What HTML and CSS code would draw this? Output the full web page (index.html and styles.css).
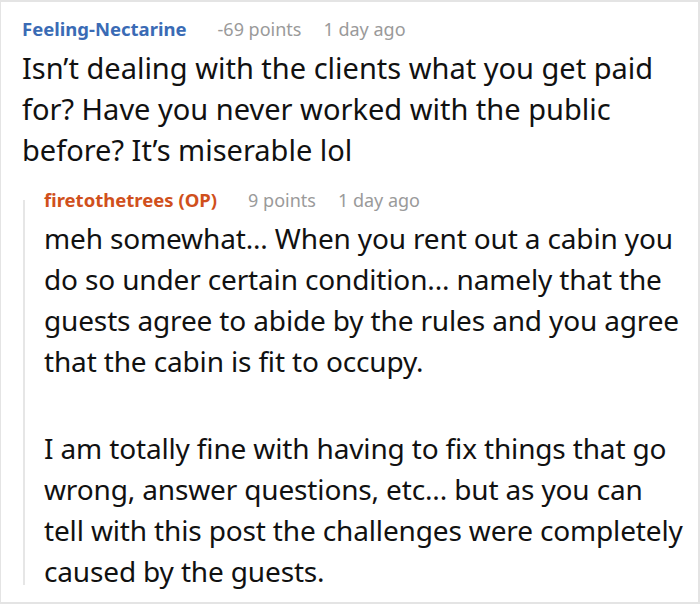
FILE: index.html
```html
<!DOCTYPE html>
<html lang="en">
<head>
<meta charset="utf-8">
<link rel="stylesheet" href="styles.css">
</head>
<body>
<div class="frame">
  <div class="comment">
    <div class="meta">
      <span class="author">Feeling-Nectarine</span>
      <span class="points">-69 points</span>
      <span class="time">1 day ago</span>
    </div>
    <div class="body">
      <p class="text-main">Isn’t dealing with the clients what you get paid for? Have you never worked with the public before? It’s miserable lol</p>
    </div>
    <div class="reply">
      <div class="meta">
        <span class="author op">firetothetrees (OP)</span>
        <span class="points">9 points</span>
        <span class="time">1 day ago</span>
      </div>
      <div class="body">
        <p class="text-reply">meh somewhat... When you rent out a cabin you do so under certain condition... namely that the guests agree to abide by the rules and you agree that the cabin is fit to occupy.</p>
        <p class="text-reply text-reply2">I am totally fine with having to fix things that go wrong, answer questions, etc... but as you can tell with this post the challenges were completely caused by the guests.</p>
      </div>
    </div>
  </div>
</div>
</body>
</html>
```

FILE: styles.css
```css
* { box-sizing: border-box; }
html, body { margin: 0; padding: 0; background: #fff; }
body {
  font-family: "Noto Sans", "Open Sans", sans-serif;
  color: #111;
}
.frame {
  width: 700px;
  height: 604px;
  border: 2px solid #e4e4e4;
  border-left-width: 1px;
  padding: 15px 1px 0 21px;
  overflow: hidden;
}
.meta {
  display: flex;
  align-items: baseline;
  height: 24px;
  line-height: 24px;
  font-size: 18px;
  margin-bottom: 6px;
  white-space: nowrap;
}
.author {
  font-weight: 700;
  font-size: 18.5px;
  color: #3a6bb5;
}
.author.op { color: #d0501c; }
.points {
  color: #9a9a9a;
  margin-left: 31px;
}
.time {
  color: #9a9a9a;
  margin-left: 22px;
}
.body {
  line-height: 41px;
}
.body p { margin: 0; }
.text-main {
  font-size: 29px;
  max-width: 640px;
}
.text-reply {
  font-size: 28px;
  letter-spacing: -0.15px;
}
.text-reply2 {
  max-width: 644px;
  margin-top: 46px !important;
}
.reply {
  position: relative;
  margin-top: 18px;
  margin-left: 1px;
  padding-left: 21px;
}
.reply::before {
  content: "";
  position: absolute;
  left: 0;
  top: 12px;
  bottom: 7px;
  width: 2px;
  background: #e6e6e6;
}
```
